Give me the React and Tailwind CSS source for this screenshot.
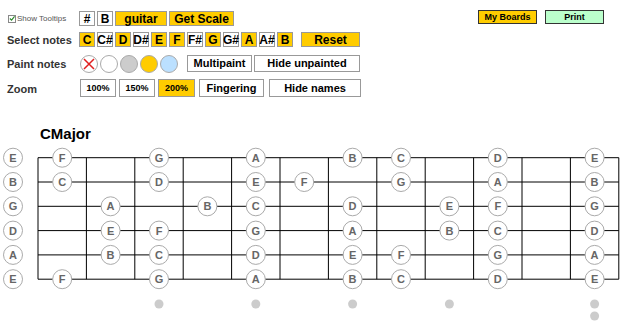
import React from 'react'

const FONT = { fontFamily: '"Liberation Sans", Arial, sans-serif' }

const NOTES = ['C', 'C#', 'D', 'D#', 'E', 'F', 'F#', 'G', 'G#', 'A', 'A#', 'B']
const SCALE = ['C', 'D', 'E', 'F', 'G', 'A', 'B']
// high E on top
const STRINGS = ['E', 'B', 'G', 'D', 'A', 'E']

const NUT_X = 38
const FRET_W = 48.4
const TOP_Y = 157.7
const STRING_GAP = 24.3

function Btn({ children, active, className = '' }) {
  return (
    <div
      className={`flex items-center justify-center border border-[#999] font-bold text-black leading-none ${active ? 'bg-[#ffcc00]' : 'bg-white'} ${className}`}
    >
      {children}
    </div>
  )
}

function Fretboard() {
  const frets = Array.from({ length: 13 }, (_, i) => NUT_X + i * FRET_W)
  const ys = STRINGS.map((_, i) => TOP_Y + i * STRING_GAP)
  const marks = []
  STRINGS.forEach((open, s) => {
    const start = NOTES.indexOf(open)
    for (let f = 0; f <= 12; f++) {
      const n = NOTES[(start + f) % 12]
      if (!SCALE.includes(n)) continue
      const x = f === 0 ? 13 : NUT_X + (f - 0.5) * FRET_W
      marks.push({ x, y: ys[s], n, key: `${s}-${f}` })
    }
  })
  const dots = [3, 5, 7, 9, 12].map(f => NUT_X + (f - 0.5) * FRET_W)

  return (
    <svg width="621" height="181" viewBox="0 145 621 181" className="block">
      {ys.map((y, i) => (
        <line key={'s' + i} x1={NUT_X} x2={frets[12]} y1={y} y2={y} stroke="#000" strokeWidth="1" />
      ))}
      {frets.map((x, i) => (
        <line key={'f' + i} x1={x} x2={x} y1={ys[0]} y2={ys[5]} stroke="#000" strokeWidth="1" />
      ))}
      {marks.map(m => (
        <g key={m.key}>
          <circle cx={m.x} cy={m.y} r="9.5" fill="#fff" stroke="#aaa" strokeWidth="1" />
          <text
            x={m.x}
            y={m.y + 4}
            textAnchor="middle"
            fontSize="11"
            fontWeight="bold"
            fill="#666"
            style={FONT}
          >
            {m.n}
          </text>
        </g>
      ))}
      {dots.map((x, i) => (
        <circle key={'d' + i} cx={x} cy="304" r="4.5" fill="#ccc" />
      ))}
      <circle cx={dots[4]} cy="316" r="4.5" fill="#ccc" />
    </svg>
  )
}

export default function App() {
  return (
    <div className="w-[621px] h-[326px] bg-white overflow-hidden" style={FONT}>
      <div className="flex flex-col pt-[11px]">
        {/* row 1 */}
        <div className="flex h-[15px] items-center">
          <div className="w-[79px] flex items-center pl-[8px] gap-[1px]">
            <div className="w-[8px] h-[8px] border border-[#888] bg-white flex items-center justify-center">
              <svg width="7" height="7" viewBox="0 0 7 7">
                <path d="M1 3.5 L3 5.5 L6.5 1" stroke="#2a8a2a" strokeWidth="1.3" fill="none" />
              </svg>
            </div>
            <span className="text-[8px] text-[#555] leading-none">Show Tooltips</span>
          </div>
          <div className="flex gap-[2px] h-full text-[12px]">
            <Btn className="w-[16px]">#</Btn>
            <Btn className="w-[16px]">B</Btn>
            <Btn active className="w-[52px]">guitar</Btn>
            <Btn active className="w-[65px]">Get Scale</Btn>
          </div>
          <div className="ml-auto mr-[17px] flex gap-[8px] self-start -mt-[1px]">
            <div className="w-[59px] h-[14px] border border-[#333] bg-[#ffcc00] flex items-center justify-center text-[9px] font-bold leading-none">My Boards</div>
            <div className="w-[59px] h-[14px] border border-[#333] bg-[#bbffcc] flex items-center justify-center text-[9px] font-bold leading-none">Print</div>
          </div>
        </div>

        {/* row 2 */}
        <div className="flex h-[15px] items-center mt-[6px]">
          <div className="w-[79px] pl-[7px] pt-[1px] text-[11px] font-bold text-[#333] leading-none">Select notes</div>
          <div className="flex gap-[2px] h-full text-[12px]">
            {NOTES.map(n => (
              <Btn key={n} active={SCALE.includes(n)} className="w-[16px]">{n}</Btn>
            ))}
          </div>
          <Btn active className="w-[59px] h-full ml-[8px] text-[12px]">Reset</Btn>
        </div>

        {/* row 3 */}
        <div className="flex h-[17px] items-center mt-[8px]">
          <div className="w-[80px] pl-[7px] pt-[1px] text-[11px] font-bold text-[#333] leading-none">Paint notes</div>
          <div className="flex gap-[2px] h-[18px]">
            <div className="w-[18px] h-[18px] rounded-full border border-[#aaa] bg-white flex items-center justify-center">
              <svg width="14" height="14" viewBox="0 0 14 14">
                <path d="M2 2 L12 12 M12 2 L2 12" stroke="#e02020" strokeWidth="1.5" />
              </svg>
            </div>
            <div className="w-[18px] h-[18px] rounded-full border border-[#aaa] bg-white" />
            <div className="w-[18px] h-[18px] rounded-full border border-[#aaa] bg-[#cccccc]" />
            <div className="w-[18px] h-[18px] rounded-full border border-[#aaa] bg-[#ffcc00]" />
            <div className="w-[18px] h-[18px] rounded-full border border-[#aaa] bg-[#bbe0ff]" />
          </div>
          <div className="flex gap-[2px] h-full ml-[9px] text-[11px]">
            <Btn className="w-[65px]">Multipaint</Btn>
            <Btn className="w-[106px]">Hide unpainted</Btn>
          </div>
        </div>

        {/* row 4 */}
        <div className="flex h-[18px] items-center mt-[7px]">
          <div className="w-[80px] pl-[7px] pt-[3px] text-[11px] font-bold text-[#333] leading-none">Zoom</div>
          <div className="flex gap-[3px] h-full text-[9px]">
            <Btn className="w-[36px]">100%</Btn>
            <Btn className="w-[36px]">150%</Btn>
            <Btn active className="w-[37px]">200%</Btn>
          </div>
          <div className="flex gap-[5px] h-full ml-[4px] text-[11px]">
            <Btn className="w-[65px]">Fingering</Btn>
            <Btn className="w-[92px]">Hide names</Btn>
          </div>
        </div>

        {/* title */}
        <div className="h-[48px] pt-[29px] pl-[40px] text-[15px] font-bold leading-[15px] text-black">CMajor</div>

        <Fretboard />
      </div>
    </div>
  )
}
